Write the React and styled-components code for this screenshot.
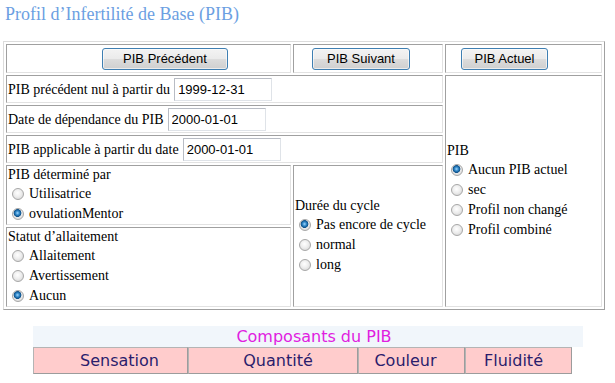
import React from 'react';
import styled, { createGlobalStyle } from 'styled-components';

const GlobalStyle = createGlobalStyle`
  html, body {
    margin: 0;
    padding: 0;
    background: #fff;
    overflow: hidden;
  }
  body {
    font-family: "Liberation Serif", "Times New Roman", serif;
    font-size: 14px;
    color: #000;
  }
`;

const Title = styled.h1`
  margin: 0 0 16px 0;
  padding: 3px 0 0 5px;
  font-size: 18px;
  line-height: 22px;
  font-weight: normal;
  color: #6c9fe2;
`;

const Frame = styled.table`
  margin-left: 3px;
  width: 602px;
  table-layout: fixed;
  border-collapse: separate;
  border-spacing: 2px;
  border: 1px solid;
  border-color: #dcdcdc #a0a0a0 #a0a0a0 #dcdcdc;
`;

const Row = styled.tr`
  height: ${(p) => p.$h}px;
`;

const Cell = styled.td`
  box-sizing: border-box;
  padding: 0 1px;
  border: 1px solid;
  border-color: #a0a0a0 #e2e2e2 #e2e2e2 #a0a0a0;
  vertical-align: ${(p) => p.$valign || 'middle'};
  white-space: nowrap;
`;

const ButtonCell = styled(Cell)`
  padding-left: ${(p) => p.$indent}px;
`;

const NavButton = styled.button`
  box-sizing: border-box;
  width: ${(p) => p.$w}px;
  height: 22px;
  padding: 0;
  font-family: "Liberation Sans", Arial, sans-serif;
  font-size: 13px;
  color: #000;
  border: 1px solid #3f7fb2;
  border-radius: 3px;
  background: linear-gradient(#f3f3f3 0%, #ebebeb 48%, #dcdcdc 52%, #cfcfcf 100%);
  box-shadow: inset 0 0 0 1px rgba(255, 255, 255, 0.6);
  vertical-align: middle;
`;

const FieldLabel = styled.span`
  vertical-align: middle;
`;

const DateInput = styled.input`
  box-sizing: border-box;
  width: 98px;
  height: 23px;
  margin: 0 0 0 4px;
  padding: 0 3px;
  font-family: "Liberation Sans", Arial, sans-serif;
  font-size: 13px;
  color: #000;
  border: 1px solid;
  border-color: #b8bcc4 #dfe3e8 #dfe3e8 #b8bcc4;
  vertical-align: middle;
  outline: none;
`;

const GroupTitle = styled.div`
  height: 18px;
  line-height: 18px;
`;

const Option = styled.label`
  display: flex;
  align-items: center;
  gap: 5px;
  height: 20px;
  padding-left: 4px;
`;

const Radio = styled.input.attrs({ type: 'radio' })`
  appearance: none;
  flex: none;
  width: 12px;
  height: 12px;
  margin: 0;
  border-radius: 50%;
  border: 1px solid #a7a7a7;
  background: radial-gradient(circle at 45% 40%, #ffffff 0%, #eeeeee 45%, #cfcfcf 100%);

  &:checked {
    background:
      radial-gradient(circle at 45% 40%, #9fd6ff 0px, #2f86c6 2px, #0d4f88 3.6px, transparent 4.2px),
      radial-gradient(circle at 45% 40%, #ffffff 0%, #eeeeee 45%, #cfcfcf 100%);
  }
`;

const Components = styled.section`
  margin: 16px 0 0 33px;
  width: 550px;
  font-family: "DejaVu Sans", Verdana, sans-serif;
  font-size: 16px;
`;

const ComponentsHeader = styled.div`
  height: 21px;
  line-height: 21px;
  padding-left: 12px;
  text-align: center;
  color: #e020e0;
  background: #f1f6fb;
`;

const PinkTable = styled.table`
  width: 539px;
  table-layout: fixed;
  border-collapse: separate;
  border-spacing: 0;
`;

const PinkCell = styled.td`
  box-sizing: border-box;
  width: ${(p) => p.$w}px;
  height: 27px;
  padding: 0 ${(p) => (p.$shift < 0 ? -2 * p.$shift : 0)}px 0 ${(p) => (p.$shift > 0 ? 2 * p.$shift : 0)}px;
  text-align: center;
  color: #2a1d6c;
  background: #ffcccc;
  border: 1px solid;
  border-color: #b4b4b4 #9c9c9c #9c9c9c #b4b4b4;
`;

function RadioGroup({ title, name, options, checked }) {
  return (
    <>
      <GroupTitle>{title}</GroupTitle>
      {options.map((o) => (
        <Option key={o}>
          <Radio name={name} defaultChecked={o === checked} />
          {o}
        </Option>
      ))}
    </>
  );
}

const dateRows = [
  ['PIB précédent nul à partir du', '1999-12-31'],
  ['Date de dépendance du PIB', '2000-01-01'],
  ['PIB applicable à partir du date', '2000-01-01'],
];

const parts = [
  ['Sensation', 155, 9],
  ['Quantité', 170, 5],
  ['Couleur', 107, -6],
  ['Fluidité', 107, -5],
];

export default function App() {
  return (
    <>
      <GlobalStyle />
      <Title>Profil d’Infertilité de Base (PIB)</Title>
      <Frame>
        <colgroup>
          <col style={{ width: 285 }} />
          <col style={{ width: 150 }} />
          <col style={{ width: 157 }} />
        </colgroup>
        <tbody>
          <Row $h={29}>
            <ButtonCell $indent={95}>
              <NavButton $w={126}>PIB Précédent</NavButton>
            </ButtonCell>
            <ButtonCell $indent={18}>
              <NavButton $w={98}>PIB Suivant</NavButton>
            </ButtonCell>
            <ButtonCell $indent={15}>
              <NavButton $w={87}>PIB Actuel</NavButton>
            </ButtonCell>
          </Row>
          {dateRows.map(([label, value], i) => (
            <Row $h={28} key={label}>
              <Cell colSpan={2}>
                <FieldLabel>{label}</FieldLabel>
                <DateInput defaultValue={value} />
              </Cell>
              {i === 0 && (
                <Cell rowSpan={5}>
                  <RadioGroup
                    title="PIB"
                    name="actuel"
                    checked="Aucun PIB actuel"
                    options={['Aucun PIB actuel', 'sec', 'Profil non changé', 'Profil combiné']}
                  />
                </Cell>
              )}
            </Row>
          ))}
          <Row $h={59}>
            <Cell $valign="top">
              <RadioGroup
                title="PIB déterminé par"
                name="source"
                checked="ovulationMentor"
                options={['Utilisatrice', 'ovulationMentor']}
              />
            </Cell>
            <Cell rowSpan={2}>
              <RadioGroup
                title="Durée du cycle"
                name="cycle"
                checked="Pas encore de cycle"
                options={['Pas encore de cycle', 'normal', 'long']}
              />
            </Cell>
          </Row>
          <Row $h={80}>
            <Cell>
              <RadioGroup
                title="Statut d’allaitement"
                name="allaitement"
                checked="Aucun"
                options={['Allaitement', 'Avertissement', 'Aucun']}
              />
            </Cell>
          </Row>
        </tbody>
      </Frame>
      <Components>
        <ComponentsHeader>Composants du PIB</ComponentsHeader>
        <PinkTable>
          <tbody>
            <tr>
              {parts.map(([name, w, shift]) => (
                <PinkCell key={name} $w={w} $shift={shift}>{name}</PinkCell>
              ))}
            </tr>
          </tbody>
        </PinkTable>
      </Components>
    </>
  );
}
